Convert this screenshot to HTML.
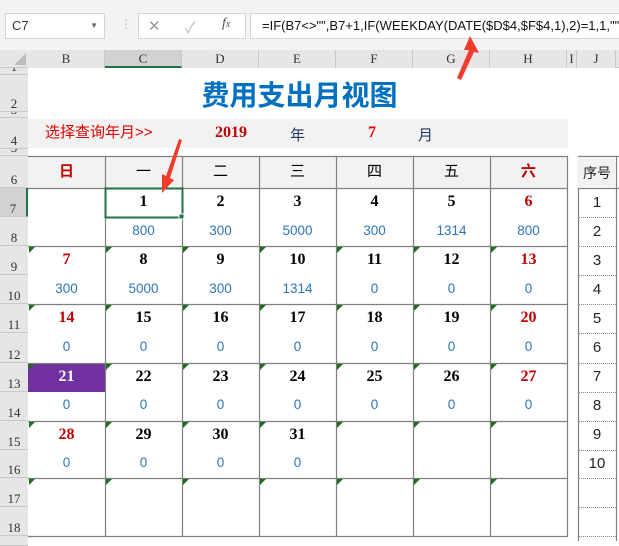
<!DOCTYPE html>
<html><head><meta charset="utf-8">
<style>
*{margin:0;padding:0;box-sizing:border-box}
body{width:619px;height:541px;overflow:hidden;background:#fff;position:relative;font-family:"Liberation Sans","Noto Sans CJK SC",sans-serif}
.a{position:absolute}
.rh{position:absolute;left:0;width:28px;background:#e6e6e6;border-bottom:1px solid #c8c8c8;font-size:13px;color:#333;text-align:center;font-family:"Liberation Serif",serif;display:flex;align-items:flex-end;justify-content:center;line-height:14px;overflow:hidden}
.ch{position:absolute;top:50px;height:18px;background:#e6e6e6;border-right:1px solid #c8c8c8;font-family:"Liberation Serif",serif;font-size:13px;text-align:center;line-height:18px;color:#333}
.d{position:absolute;font-family:"Liberation Serif",serif;font-weight:bold;font-size:16px;text-align:center;width:77px}
.v{position:absolute;font-size:13.5px;color:#2e75b6;text-align:center;width:77px}
.tri{position:absolute;width:0;height:0;border-top:6px solid #1e6e1e;border-right:6px solid transparent}
</style></head><body>
<div class="a" style="left:0;top:0;width:619px;height:50px;background:#f3f3f3"></div>
<div class="a" style="left:5px;top:13px;width:100px;height:26px;background:#fff;border:1px solid #d4d4d4;font-size:13px;line-height:24px;padding-left:6px;color:#333">C7<span style="position:absolute;right:6px;top:0;font-size:8px;color:#666">▼</span></div>
<div class="a" style="left:120px;top:17px;color:#aaa;font-size:12px">⋮</div>
<div class="a" style="left:138px;top:13px;width:108px;height:26px;background:#fff;border:1px solid #d4d4d4"></div>
<div class="a" style="left:148px;top:17px;color:#999;font-size:15px">✕</div>
<div class="a" style="left:185px;top:17px;color:#bbb;font-size:15px">✓</div>
<div class="a" style="left:222px;top:16px;color:#555;font-size:14px;font-style:italic;font-family:'Liberation Serif',serif">f<span style="font-size:10px">x</span></div>
<div class="a" style="left:250px;top:13px;width:380px;height:26px;background:#fff;border:1px solid #d4d4d4;font-size:13px;line-height:24px;padding-left:11px;color:#111;white-space:nowrap">=IF(B7&lt;&gt;"",B7+1,IF(WEEKDAY(DATE($D$4,$F$4,1),2)=1,1,""))</div>
<div class="a" style="left:0;top:50px;width:619px;height:18px;background:#e6e6e6;border-bottom:1px solid #c8c8c8"></div>
<div class="a" style="left:14px;top:53px;width:0;height:0;border-left:12px solid transparent;border-bottom:12px solid #bdbdbd"></div>
<div class="ch" style="left:28px;width:77px">B</div>
<div class="ch" style="left:105px;width:77px;background:#d2d2d2;border-bottom:2px solid #217346">C</div>
<div class="ch" style="left:182px;width:77px">D</div>
<div class="ch" style="left:259px;width:77px">E</div>
<div class="ch" style="left:336px;width:77px">F</div>
<div class="ch" style="left:413px;width:77px">G</div>
<div class="ch" style="left:490px;width:77px">H</div>
<div class="ch" style="left:567px;width:10px">I</div>
<div class="ch" style="left:577px;width:39px">J</div>
<div class="rh" style="top:68px;height:7px">1</div>
<div class="rh" style="top:75px;height:37px">2</div>
<div class="rh" style="top:112px;height:6px">3</div>
<div class="rh" style="top:118px;height:31px">4</div>
<div class="rh" style="top:149px;height:7px">5</div>
<div class="rh" style="top:156px;height:32px">6</div>
<div class="rh" style="top:188px;height:29px;background:#d2d2d2;border-right:2px solid #217346">7</div>
<div class="rh" style="top:217px;height:29px">8</div>
<div class="rh" style="top:246px;height:29px">9</div>
<div class="rh" style="top:275px;height:29px">10</div>
<div class="rh" style="top:304px;height:29px">11</div>
<div class="rh" style="top:333px;height:30px">12</div>
<div class="rh" style="top:363px;height:29px">13</div>
<div class="rh" style="top:392px;height:29px">14</div>
<div class="rh" style="top:421px;height:29px">15</div>
<div class="rh" style="top:450px;height:28px">16</div>
<div class="rh" style="top:478px;height:29px">17</div>
<div class="rh" style="top:507px;height:29px">18</div>
<div class="rh" style="top:536px;height:10px"></div>
<div class="a" style="left:28px;top:75px;width:543px;text-align:center;font-size:28px;font-weight:bold;color:#0070c0;font-family:'Noto Sans CJK SC',sans-serif;line-height:38px">费用支出月视图</div>
<div class="a" style="left:28px;top:119px;width:540px;height:29px;background:#f2f2f2"></div>
<div class="a" style="left:45px;top:124px;font-size:15px;color:#e00000;line-height:18px">选择查询年月&gt;&gt;</div>
<div class="a" style="left:215px;top:124px;font-size:16px;font-weight:bold;color:#c00000;font-family:'Liberation Serif',serif">2019</div>
<div class="a" style="left:290px;top:124px;font-size:15px;color:#1f3864">年</div>
<div class="a" style="left:368px;top:124px;font-size:16px;font-weight:bold;color:#e00000;font-family:'Liberation Serif',serif">7</div>
<div class="a" style="left:418px;top:124px;font-size:15px;color:#1f3864">月</div>
<div class="a" style="left:28px;top:156px;width:540px;height:32px;background:#f2f2f2"></div>
<div class="a" style="left:28px;top:363px;width:77px;height:29px;background:#7030a0"></div>
<svg class="a" style="left:0;top:0" width="619" height="541">
<g stroke="#7f7f7f" stroke-width="1.2" fill="none">
<line x1="28" y1="156.5" x2="568" y2="156.5"/>
<line x1="28" y1="188.5" x2="568" y2="188.5"/>
<line x1="28" y1="246.5" x2="568" y2="246.5"/>
<line x1="28" y1="304.5" x2="568" y2="304.5"/>
<line x1="28" y1="363.5" x2="568" y2="363.5"/>
<line x1="28" y1="421.5" x2="568" y2="421.5"/>
<line x1="28" y1="478.5" x2="568" y2="478.5"/>
<line x1="28" y1="536.5" x2="568" y2="536.5"/>
<line x1="105.5" y1="156" x2="105.5" y2="537"/>
<line x1="182.5" y1="156" x2="182.5" y2="537"/>
<line x1="259.5" y1="156" x2="259.5" y2="537"/>
<line x1="336.5" y1="156" x2="336.5" y2="537"/>
<line x1="413.5" y1="156" x2="413.5" y2="537"/>
<line x1="490.5" y1="156" x2="490.5" y2="537"/>
<line x1="567.5" y1="156" x2="567.5" y2="537"/>
<line x1="578.5" y1="156" x2="578.5" y2="541"/>
<line x1="616.5" y1="156" x2="616.5" y2="541"/>
<line x1="578" y1="156.5" x2="619" y2="156.5"/>
<line x1="578" y1="188.5" x2="619" y2="188.5"/>
</g>
<g stroke="#888" stroke-width="1" stroke-dasharray="1,1">
<line x1="579" y1="217.5" x2="616" y2="217.5"/><line x1="579" y1="246.5" x2="616" y2="246.5"/>
<line x1="579" y1="275.5" x2="616" y2="275.5"/><line x1="579" y1="304.5" x2="616" y2="304.5"/>
<line x1="579" y1="333.5" x2="616" y2="333.5"/><line x1="579" y1="363.5" x2="616" y2="363.5"/>
<line x1="579" y1="392.5" x2="616" y2="392.5"/><line x1="579" y1="421.5" x2="616" y2="421.5"/>
<line x1="579" y1="450.5" x2="616" y2="450.5"/><line x1="579" y1="478.5" x2="616" y2="478.5"/>
<line x1="579" y1="507.5" x2="616" y2="507.5"/><line x1="579" y1="536.5" x2="616" y2="536.5"/>
</g>
<rect x="105.5" y="188.5" width="77" height="29" fill="none" stroke="#217346" stroke-width="2"/>
<rect x="179" y="214" width="5" height="5" fill="#217346" stroke="#fff" stroke-width="1"/>
<rect x="578" y="157" width="38" height="31" fill="#f2f2f2"/>
</svg>
<div class="a" style="left:578px;top:163px;width:38px;text-align:center;font-size:14px;color:#222">序号</div>
<div class="a" style="left:578px;top:188px;width:38px;text-align:center;font-size:15px;color:#222;line-height:29px">1<br>2<br>3<br>4<br>5<br>6<br>7<br>8<br>9<br>10</div>
<div class="a" style="top:162px;left:28px;width:540px;display:flex;font-size:15px;line-height:20px">
<div style="width:77px;text-align:center;color:#c00000;font-weight:bold">日</div>
<div style="width:77px;text-align:center">一</div>
<div style="width:77px;text-align:center">二</div>
<div style="width:77px;text-align:center">三</div>
<div style="width:77px;text-align:center">四</div>
<div style="width:77px;text-align:center">五</div>
<div style="width:77px;text-align:center;color:#c00000;font-weight:bold">六</div>
</div>
<div class="tri" style="left:29px;top:247px"></div><div class="tri" style="left:106px;top:247px"></div><div class="tri" style="left:183px;top:247px"></div><div class="tri" style="left:260px;top:247px"></div><div class="tri" style="left:337px;top:247px"></div><div class="tri" style="left:414px;top:247px"></div><div class="tri" style="left:491px;top:247px"></div>
<div class="tri" style="left:29px;top:305px"></div><div class="tri" style="left:106px;top:305px"></div><div class="tri" style="left:183px;top:305px"></div><div class="tri" style="left:260px;top:305px"></div><div class="tri" style="left:337px;top:305px"></div><div class="tri" style="left:414px;top:305px"></div><div class="tri" style="left:491px;top:305px"></div>
<div class="tri" style="left:29px;top:364px"></div><div class="tri" style="left:106px;top:364px"></div><div class="tri" style="left:183px;top:364px"></div><div class="tri" style="left:260px;top:364px"></div><div class="tri" style="left:337px;top:364px"></div><div class="tri" style="left:414px;top:364px"></div><div class="tri" style="left:491px;top:364px"></div>
<div class="tri" style="left:29px;top:422px"></div><div class="tri" style="left:106px;top:422px"></div><div class="tri" style="left:183px;top:422px"></div><div class="tri" style="left:260px;top:422px"></div><div class="tri" style="left:337px;top:422px"></div><div class="tri" style="left:414px;top:422px"></div><div class="tri" style="left:491px;top:422px"></div>
<div class="tri" style="left:29px;top:479px"></div><div class="tri" style="left:106px;top:479px"></div><div class="tri" style="left:183px;top:479px"></div><div class="tri" style="left:260px;top:479px"></div><div class="tri" style="left:337px;top:479px"></div><div class="tri" style="left:414px;top:479px"></div><div class="tri" style="left:491px;top:479px"></div>
<div class="d" style="left:105px;top:193px">1</div><div class="d" style="left:182px;top:193px">2</div><div class="d" style="left:259px;top:193px">3</div><div class="d" style="left:336px;top:193px">4</div><div class="d" style="left:413px;top:193px">5</div><div class="d" style="left:490px;top:193px;color:#c00000">6</div>
<div class="v" style="left:105px;top:223px">800</div><div class="v" style="left:182px;top:223px">300</div><div class="v" style="left:259px;top:223px">5000</div><div class="v" style="left:336px;top:223px">300</div><div class="v" style="left:413px;top:223px">1314</div><div class="v" style="left:490px;top:223px">800</div>
<div class="d" style="left:28px;top:251px;color:#c00000">7</div><div class="d" style="left:105px;top:251px">8</div><div class="d" style="left:182px;top:251px">9</div><div class="d" style="left:259px;top:251px">10</div><div class="d" style="left:336px;top:251px">11</div><div class="d" style="left:413px;top:251px">12</div><div class="d" style="left:490px;top:251px;color:#c00000">13</div>
<div class="v" style="left:28px;top:281px">300</div><div class="v" style="left:105px;top:281px">5000</div><div class="v" style="left:182px;top:281px">300</div><div class="v" style="left:259px;top:281px">1314</div><div class="v" style="left:336px;top:281px">0</div><div class="v" style="left:413px;top:281px">0</div><div class="v" style="left:490px;top:281px">0</div>
<div class="d" style="left:28px;top:309px;color:#c00000">14</div><div class="d" style="left:105px;top:309px">15</div><div class="d" style="left:182px;top:309px">16</div><div class="d" style="left:259px;top:309px">17</div><div class="d" style="left:336px;top:309px">18</div><div class="d" style="left:413px;top:309px">19</div><div class="d" style="left:490px;top:309px;color:#c00000">20</div>
<div class="v" style="left:28px;top:339px">0</div><div class="v" style="left:105px;top:339px">0</div><div class="v" style="left:182px;top:339px">0</div><div class="v" style="left:259px;top:339px">0</div><div class="v" style="left:336px;top:339px">0</div><div class="v" style="left:413px;top:339px">0</div><div class="v" style="left:490px;top:339px">0</div>
<div class="d" style="left:28px;top:368px;color:#fff">21</div><div class="d" style="left:105px;top:368px">22</div><div class="d" style="left:182px;top:368px">23</div><div class="d" style="left:259px;top:368px">24</div><div class="d" style="left:336px;top:368px">25</div><div class="d" style="left:413px;top:368px">26</div><div class="d" style="left:490px;top:368px;color:#c00000">27</div>
<div class="v" style="left:28px;top:397px">0</div><div class="v" style="left:105px;top:397px">0</div><div class="v" style="left:182px;top:397px">0</div><div class="v" style="left:259px;top:397px">0</div><div class="v" style="left:336px;top:397px">0</div><div class="v" style="left:413px;top:397px">0</div><div class="v" style="left:490px;top:397px">0</div>
<div class="d" style="left:28px;top:426px;color:#c00000">28</div><div class="d" style="left:105px;top:426px">29</div><div class="d" style="left:182px;top:426px">30</div><div class="d" style="left:259px;top:426px">31</div>
<div class="v" style="left:28px;top:455px">0</div><div class="v" style="left:105px;top:455px">0</div><div class="v" style="left:182px;top:455px">0</div><div class="v" style="left:259px;top:455px">0</div>
<svg class="a" style="left:0;top:0" width="619" height="541">
<polygon points="470,36 479,53 474,52 461,80 457,78 469,50 464,50" fill="#f03c2c"/>
<polygon points="162,193 162,174 166,176 179,139 182,140 170,178 174,180" fill="#f03c2c"/>
</svg>
</body></html>
